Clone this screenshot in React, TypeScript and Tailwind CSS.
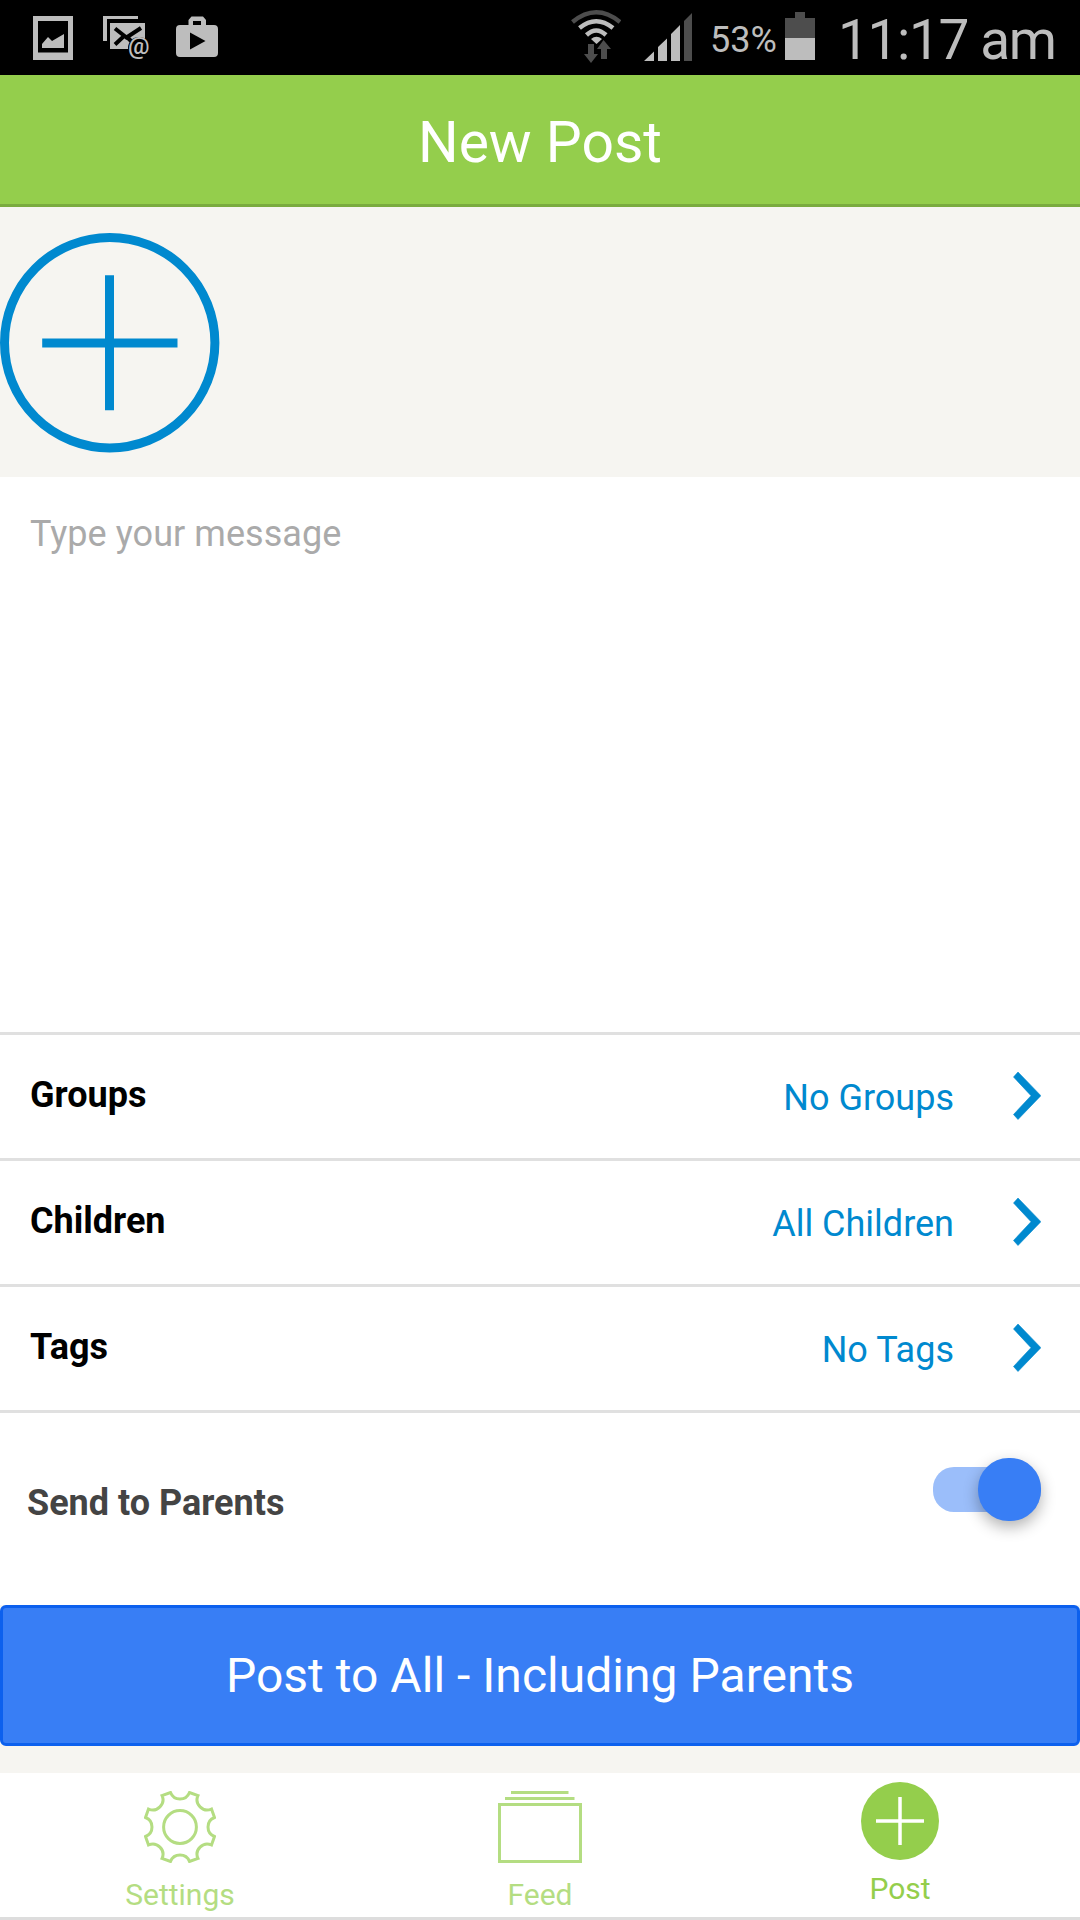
import React from 'react';

const rows = [
  { label: 'Groups', value: 'No Groups' },
  { label: 'Children', value: 'All Children' },
  { label: 'Tags', value: 'No Tags' },
];

function StatusBar() {
  return (
    <div className="h-[75px] bg-black flex items-center text-[#bdbdbd]">
      {/* Notifications */}
      <svg className="ml-[33px] shrink-0" width="40" height="75" viewBox="33 0 40 75" fill="currentColor">
        <path fillRule="evenodd" d="M33 16h40v44H33zM38 21v31.500h30V21z" />
        <path d="M42 48v-4l6-7 4 4 12-7v14z" />
      </svg>
      <svg className="ml-[30px] shrink-0" width="47" height="75" viewBox="103 0 47 75" fill="currentColor">
        <path d="M103 16h35v3h-31v22h-4z" />
        <path d="M110 23h35v26h-35z" />
        <path d="M115 28.500l11.500 9L141 28M115 44.500l8-7.500M126 36l8 8" fill="none" stroke="#000" strokeWidth="4" />
        <circle cx="139" cy="48" r="11" fill="#000" />
        <text x="128" y="53.500" fontSize="24" fontFamily="Roboto, sans-serif" fontWeight="500">@</text>
      </svg>
      <svg className="ml-[26px] shrink-0" width="42" height="75" viewBox="176 0 42 75" fill="currentColor">
        <path fillRule="evenodd" d="M188.500 25v-5l3-3.500h11.500l3 3.500v5H214q4 0 4 4v24q0 4-4 4h-34q-4 0-4-4V29q0-4 4-4zM193 21v4h8v-4zM190 32.500v17l15.500-8.500z" />
      </svg>

      {/* Connectivity */}
      <svg className="ml-auto shrink-0" width="50" height="75" viewBox="571 0 50 75" fill="none" strokeWidth="4.500">
        <path d="M572.500 22Q596.200 2.500 620 22" stroke="#4d4d4d" />
        <path d="M579.500 28Q596.200 14.500 613 28" stroke="currentColor" />
        <path d="M586.500 35Q596.200 26 606 35" stroke="currentColor" />
        <path d="M591 39Q596.500 34.500 602 39L596.500 44z" fill="currentColor" />
        <path d="M588 44h6v10h4l-7 9-7-9h4zM601 59V49h-4l6.500-9 7.500 9h-4v10z" fill="#4d4d4d" />
      </svg>
      <svg className="ml-[23px] shrink-0" width="48" height="75" viewBox="644 0 48 75" fill="currentColor">
        <path d="M644 61l10-9.500V61zM658 61V47l9-8.500V61zM671 61V34l9-9v36z" />
        <path d="M684 61V21l8-8v48z" fill="#4d4d4d" />
      </svg>
      <span className="ml-[18px] w-[66px] text-[36px] leading-none pt-[5px] whitespace-nowrap">53%</span>
      <svg className="ml-[9px] shrink-0" width="30" height="75" viewBox="785 0 30 75">
        <path d="M785 38V18h10v-6h10v6h10v20z" fill="#4d4d4d" />
        <path d="M785 38h30v22h-30z" fill="currentColor" />
      </svg>
      <span className="ml-[23px] w-[242px] text-[55px] leading-none pt-[5px] tracking-[-1.400px] whitespace-nowrap">11:17 am</span>
    </div>
  );
}

function Tabs() {
  return (
    <nav className="h-[147px] bg-white border-b-[3px] border-[#dddddd] grid grid-cols-3 text-[30px] leading-[36px] text-[#b4dd82]">
      <div className="flex flex-col items-center pt-[18px]">
        <svg width="72" height="72" viewBox="-36 -36 72 72" fill="none" stroke="currentColor" strokeWidth="3">
          <circle r="16.400" />
          <path d="M-9.500-34.500A10.200 10.200 0 0 0 9.500-34.500L18-31.500A10.200 10.200 0 0 0 31.500-18L34.500-9.500A10.200 10.200 0 0 0 34.500 9.500L31.500 18A10.200 10.200 0 0 0 18 31.500L9.500 34.500A10.200 10.200 0 0 0-9.500 34.500L-18 31.500A10.200 10.200 0 0 0-31.500 18L-34.500 9.500A10.200 10.200 0 0 0-34.500-9.500L-31.500-18A10.200 10.200 0 0 0-18-31.500z" />
        </svg>
        <span className="mt-[14px]">Settings</span>
      </div>
      <div className="flex flex-col items-center pt-[18px]">
        <svg width="84" height="72" viewBox="0 0 84 72" fill="none" stroke="currentColor" strokeWidth="3">
          <path d="M13 1.500h57.500M7 7.500h69.500M1.500 13.500h81v57h-81z" />
        </svg>
        <span className="mt-[14px]">Feed</span>
      </div>
      <div className="flex flex-col items-center pt-[9px] text-[#94ce4c]">
        <svg width="78" height="78" viewBox="0 0 78 78">
          <circle cx="39" cy="39" r="39" fill="currentColor" />
          <path d="M15 39h48M39 15v48" stroke="#fff" strokeWidth="3.500" />
        </svg>
        <span className="mt-[11px]">Post</span>
      </div>
    </nav>
  );
}

export default function App() {
  return (
    <div className="w-[1080px] h-[1920px] flex flex-col overflow-hidden bg-[#f6f5f1] font-['Roboto',sans-serif]">
      <StatusBar />

      <header className="h-[132px] bg-[#94ce4c] border-b-[3px] border-[#7aab3f] flex items-center justify-center pt-[6px]">
        <h1 className="text-[57px] leading-none text-white">New Post</h1>
      </header>

      {/* Add photo */}
      <section className="h-[270px] flex items-center pt-px">
        <svg width="220" height="220" viewBox="0 0 220 220" fill="none" stroke="#0089cf" strokeWidth="9">
          <circle cx="109.700" cy="109.700" r="105.200" />
          <path d="M42.200 110h135.300M109.500 42.200v135" />
        </svg>
      </section>

      {/* Message */}
      <section className="h-[555px] bg-white px-[30px] pt-[36px] text-[36px] leading-[42px] tracking-[0.050px] text-[#aaaaaa]">
        Type your message
      </section>

      {/* Audience */}
      <section className="bg-white">
        {rows.map((row) => (
          <div key={row.label} className="h-[126px] border-t-[3px] border-[#e0e0e0] flex items-center pl-[30px] pr-[39px]">
            <span className="text-[36px] leading-none font-bold text-black pb-[4px]">{row.label}</span>
            <span className="ml-auto text-[36px] leading-none text-[#0089cf] pt-[3px]">{row.value}</span>
            <svg className="ml-[59px] mb-[2px]" width="28" height="48" viewBox="0 0 28 48" fill="#0089cf">
              <path d="M.500 5L5 0l22.900 23.700L5 47.500.500 42.500l17.500-18.800z" stroke="#0089cf" strokeWidth="0.600" />
            </svg>
          </div>
        ))}
      </section>

      <section className="h-[195px] bg-white border-t-[3px] border-[#e0e0e0] flex justify-between pl-[27px] pr-[39px]">
        <span className="pt-[69px] text-[36px] leading-[42px] font-bold text-[#444444]">Send to Parents</span>
        <div className="mt-[54px] w-[108px] h-[45px] rounded-[21px] bg-[#9bbefa] flex items-center justify-end">
          <div className="w-[63px] h-[63px] shrink-0 rounded-[30.500px] bg-[#387ef5] shadow-[0_6px_15px_rgba(0,0,0,0.3)]" />
        </div>
      </section>

      <button className="h-[141px] mb-[27px] shrink-0 rounded-[6px] border-[3px] border-[#0c60ee] bg-[#387ef5] text-white text-[48px] leading-none tracking-[0.030px]">
        Post to All - Including Parents
      </button>

      <Tabs />
    </div>
  );
}
